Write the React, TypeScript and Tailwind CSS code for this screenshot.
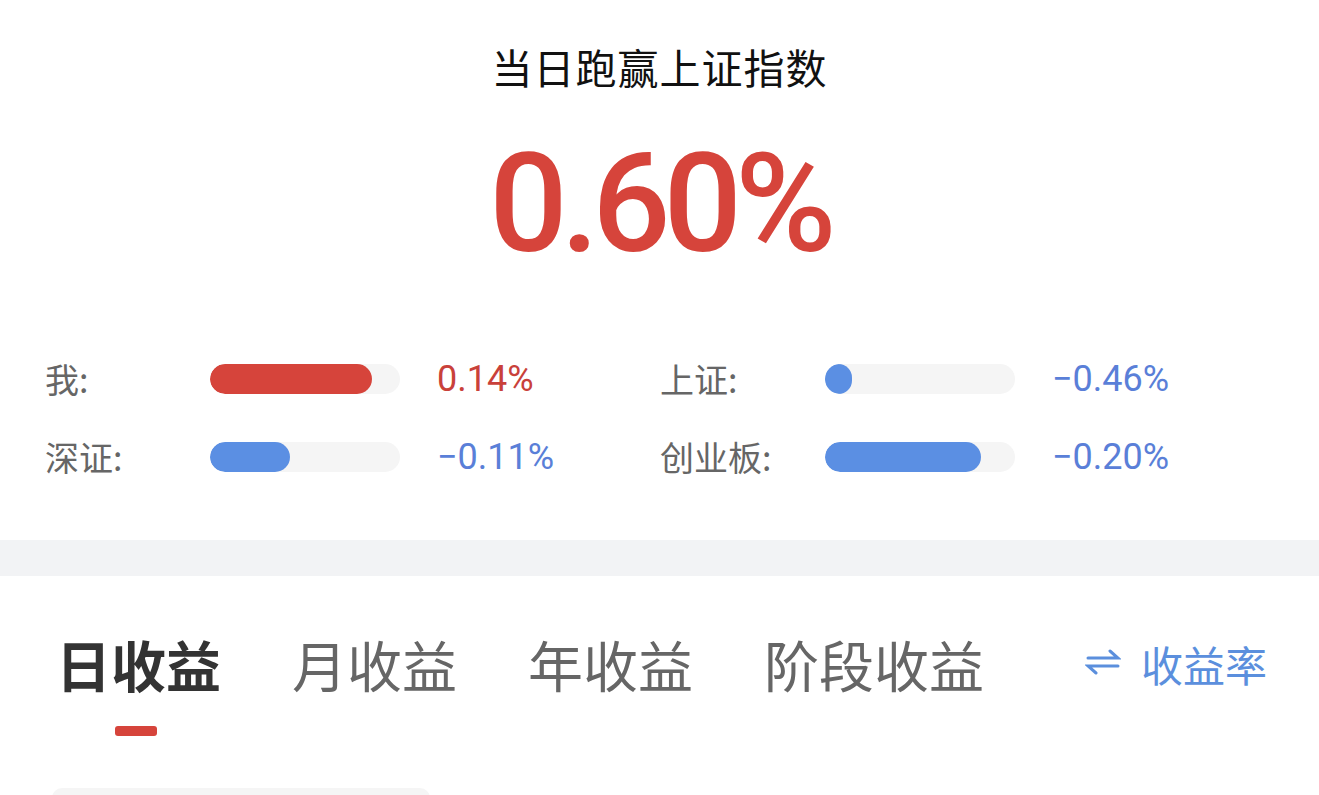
import React from 'react';

const cjk = { fontFamily: '"Noto Sans CJK SC", "Noto Sans", sans-serif' };
const num = { fontFamily: 'Roboto, "Noto Sans", sans-serif' };

type Row = { label: string; pct: number; value: string; up: boolean };

const rows: Row[] = [
  { label: '我:', pct: 85, value: '0.14%', up: true },
  { label: '上证:', pct: 14, value: '−0.46%', up: false },
  { label: '深证:', pct: 42, value: '−0.11%', up: false },
  { label: '创业板:', pct: 82, value: '−0.20%', up: false },
];

const tabs = ['日收益', '月收益', '年收益', '阶段收益'];

const SwapIcon = () => (
  <svg width="36" height="28" viewBox="0 0 36 28" fill="none" stroke="#5b8fdd" strokeWidth="3" strokeLinecap="round">
    <path d="M3 10 H33 L25 3" />
    <path d="M33 18 H3 L11 25" />
  </svg>
);

export default function App() {
  return (
    <div className="w-[1319px] h-[795px] overflow-hidden bg-white" style={cjk}>
      {/* summary */}
      <div className="flex flex-col items-center pt-[46px]">
        <h1 className="text-[41px] leading-none text-[#111] tracking-[1px]">当日跑赢上证指数</h1>
        <div className="mt-[48px] text-[138px] leading-none font-medium text-[#d6443b] tracking-[-7px]" style={num}>
          0.60%
        </div>
      </div>

      <div className="grid grid-cols-[615px_1fr] gap-y-[48px] px-[45px] mt-[91px]">
        {rows.map((r) => (
          <div key={r.label} className="flex items-center h-[30px]">
            <span className="w-[165px] text-[34px] leading-none text-[#666]">{r.label}</span>
            <div className="w-[190px] h-[30px] rounded-full bg-[#f5f5f5] overflow-hidden">
              <div
                className={`h-full rounded-full ${r.up ? 'bg-[#d6443b]' : 'bg-[#5b8fe3]'}`}
                style={{ width: `${r.pct}%` }}
              />
            </div>
            <span
              className={`ml-[37px] text-[36px] leading-none ${r.up ? 'text-[#c9413a]' : 'text-[#5a7fd8]'}`}
              style={num}
            >
              {r.value}
            </span>
          </div>
        ))}
      </div>

      <div className="h-[36px] bg-[#f2f3f5] mt-[68px]" />

      {/* tabs */}
      <div className="flex items-center pl-[56px] pr-[52px] pt-[60px]">
        <div className="flex items-center gap-[71px]">
          {tabs.map((t, i) => (
            <div key={t} className="relative">
              <span className={`text-[55px] leading-none ${i === 0 ? 'font-bold text-[#333]' : 'text-[#666]'}`}>{t}</span>
              {i === 0 && (
                <div className="absolute left-[59px] top-[90px] w-[42px] h-[10px] rounded-[3px] bg-[#d6443b]" />
              )}
            </div>
          ))}
        </div>
        <div className="ml-auto flex items-center gap-[20px] text-[#5b8fdd]">
          <div className="-mt-[4px]">
            <SwapIcon />
          </div>
          <span className="text-[42px] leading-none">收益率</span>
        </div>
      </div>

      <div className="ml-[52px] mt-[96px] w-[378px] h-[60px] rounded-[10px] bg-[#f5f5f5]" />
    </div>
  );
}
